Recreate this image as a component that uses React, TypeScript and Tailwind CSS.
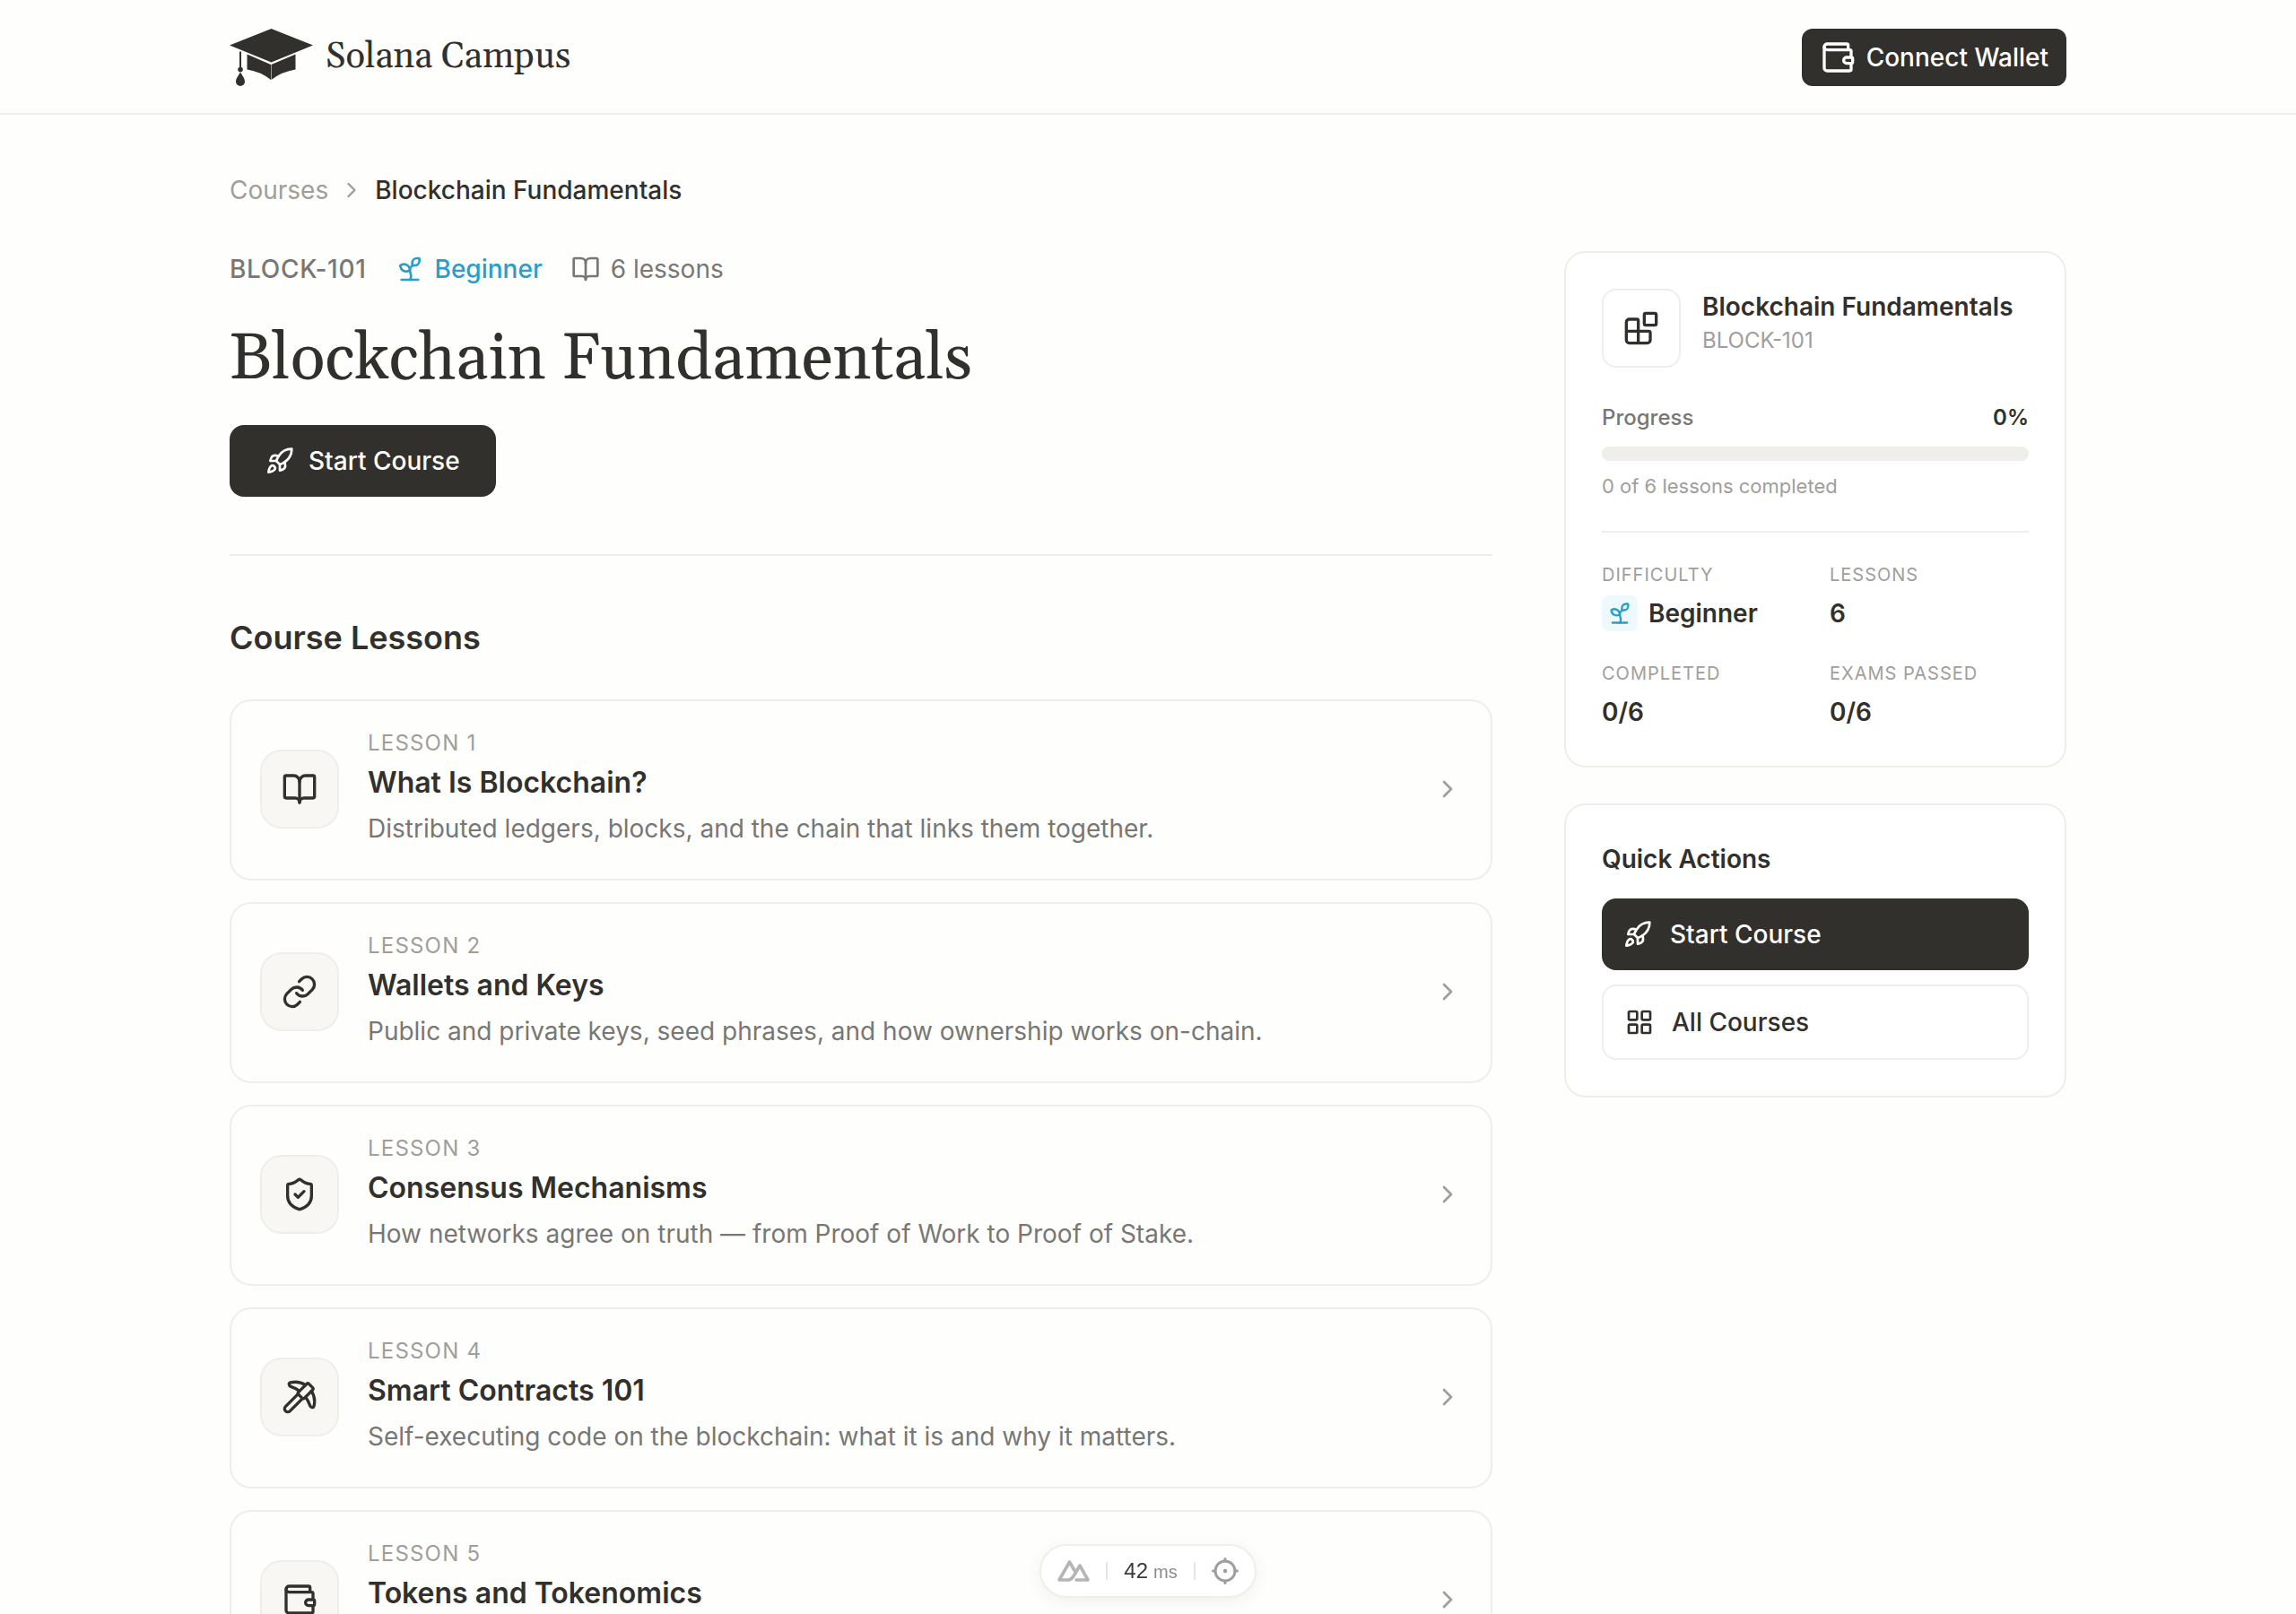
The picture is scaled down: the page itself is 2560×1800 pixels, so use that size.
import { BookOpen, Link, ShieldCheck, Pickaxe, Wallet, ChevronRight, Sprout, Rocket, Blocks, LayoutGrid, type LucideIcon } from "lucide-react";

const lessons: { icon: LucideIcon; title: string; text: string }[] = [
  { icon: BookOpen, title: "What Is Blockchain?", text: "Distributed ledgers, blocks, and the chain that links them together." },
  { icon: Link, title: "Wallets and Keys", text: "Public and private keys, seed phrases, and how ownership works on-chain." },
  { icon: ShieldCheck, title: "Consensus Mechanisms", text: "How networks agree on truth — from Proof of Work to Proof of Stake." },
  { icon: Pickaxe, title: "Smart Contracts 101", text: "Self-executing code on the blockchain: what it is and why it matters." },
  { icon: Wallet, title: "Tokens and Tokenomics", text: "Fungible and non-fungible tokens, supply, and incentives." },
];

function Logo() {
  return (
    <svg viewBox="0 0 93 64" className="h-16 w-[93px]" fill="#32302c" aria-hidden="true">
      <path d="M46.5 0 93 18.500 46.500 37.500 0 18.500Z" />
      <path d="M19.500 28.500 46 40v17Q35 48 19.500 45.500Z" />
      <path d="M73.500 28.500 46.500 40v17Q58 48 73.500 45.500Z" />
      <path d="M11 25.500h2V43h-2Z" />
      <circle cx="12" cy="45.500" r="2.800" />
      <path d="M12 48c1.500 4 5 7 5 11.200a5 4.800 0 0 1-10 0C7 55 10.500 52 12 48Z" />
    </svg>
  );
}

function Header() {
  return (
    <header className="border-b-2 border-[#efeeea]">
      <div className="mx-auto flex max-w-[2048px] items-center justify-between pt-8 pb-[30px]">
        <a href="#" className="flex items-center gap-3.5">
          <Logo />
          <span className="font-[Gelasio,Georgia,serif] text-[40px] leading-[56px]">Solana Campus</span>
        </a>
        <button type="button" className="flex h-16 items-center gap-3 rounded-xl bg-[#32302c] px-5 text-[28px] font-medium text-white">
          <Wallet size={40} />
          Connect Wallet
        </button>
      </div>
    </header>
  );
}

function LessonCard({ icon: Icon, title, text, index }: { icon: LucideIcon; title: string; text: string; index: number }) {
  return (
    <li>
      <a href="#" className="flex items-center gap-8 rounded-3xl border-2 border-[#efeeea] px-8 pt-[31px] pb-[33px]">
        <span className="flex size-[88px] shrink-0 items-center justify-center rounded-3xl border-2 border-[#efeeea] bg-[#f8f7f4]">
          <Icon size={40} />
        </span>
        <span className="flex min-w-0 flex-1 flex-col">
          <span className="text-2xl tracking-[1.2px] text-[#9f9e9b]">LESSON {index}</span>
          <span className="mt-1 text-[32px] leading-[48px] font-semibold">{title}</span>
          <span className="mt-1 text-[28px] leading-[46px] text-[#787774]">{text}</span>
        </span>
        <ChevronRight size={32} className="shrink-0 text-[#9f9e9b]" />
      </a>
    </li>
  );
}

function Stat({ label, value, icon }: { label: string; value: string; icon?: boolean }) {
  return (
    <div>
      <dt className="text-xl leading-[30px] tracking-[1px] text-[#9f9e9b]">{label}</dt>
      <dd className="mt-2 flex h-10 items-center gap-3 text-[28px] font-semibold">
        {icon && (
          <span className="flex size-10 items-center justify-center rounded-lg bg-[#edf9fd] text-[#2a9dc8]">
            <Sprout size={28} />
          </span>
        )}
        {value}
      </dd>
    </div>
  );
}

function Sidebar() {
  return (
    <aside className="flex w-[560px] shrink-0 flex-col gap-10">
      <section className="rounded-3xl border-2 border-[#efeeea] bg-white p-10">
        <div className="flex gap-6">
          <span className="flex size-[88px] shrink-0 items-center justify-center rounded-2xl border-2 border-[#efeeea]">
            <Blocks size={40} />
          </span>
          <div>
            <h2 className="text-[28px] leading-10 font-semibold">Blockchain Fundamentals</h2>
            <p className="text-2xl leading-9 text-[#9f9e9b]">BLOCK-101</p>
          </div>
        </div>
        <div className="mt-10 flex justify-between text-2xl font-medium">
          <span id="progress" className="text-[#787774]">Progress</span>
          <span className="font-semibold">0%</span>
        </div>
        <div role="progressbar" aria-labelledby="progress" aria-valuenow={0} className="mt-4 h-4 rounded-full bg-[#efeeea]" />
        <p className="mt-3 text-[22px] leading-8 text-[#9f9e9b]">0 of 6 lessons completed</p>
        <dl className="mt-[34px] grid grid-cols-2 gap-8 border-t-2 border-[#efeeea] pt-8">
          <Stat label="DIFFICULTY" value="Beginner" icon />
          <Stat label="LESSONS" value="6" />
          <Stat label="COMPLETED" value="0/6" />
          <Stat label="EXAMS PASSED" value="0/6" />
        </dl>
      </section>
      <section className="rounded-3xl border-2 border-[#efeeea] bg-white p-10">
        <h2 className="text-[28px] leading-10 font-semibold">Quick Actions</h2>
        <button type="button" className="mt-6 flex h-20 w-full items-center gap-5 rounded-2xl bg-[#32302c] px-6 text-[28px] font-medium text-white">
          <Rocket size={32} />
          Start Course
        </button>
        <button type="button" className="mt-4 flex h-[84px] w-full items-center gap-5 rounded-2xl border-2 border-[#efeeea] px-6 text-[28px] font-medium">
          <LayoutGrid size={32} />
          All Courses
        </button>
      </section>
    </aside>
  );
}

function DevBar() {
  return (
    <div className="fixed bottom-[18px] left-1/2 flex h-[60px] w-[242px] -translate-x-1/2 items-center justify-between rounded-full border-2 border-[#efeeee] bg-white px-[18px] shadow-[0_4px_20px_rgba(0,0,0,0.06)]">
      <button type="button" aria-label="Open devtools" className="flex">
        <svg viewBox="0 0 36 24" className="h-6 w-9" fill="none" stroke="#b5b5b5" strokeWidth="3.600" strokeLinejoin="round" strokeLinecap="round" aria-hidden="true">
          <path d="M21 22h13L25 6l-6.500 11Q15.500 22 12 22H2L13.500 2l6.500 11" />
        </svg>
      </button>
      <span className="h-5 w-0.5 bg-[#e6e6e6]" />
      <span className="flex items-baseline gap-1.5 font-[Liberation_Sans,Arial,sans-serif] text-[24px] text-[#3a3a3a]">
        42 <span className="text-[20px] text-[#8c8c8c]">ms</span>
      </span>
      <span className="h-5 w-0.5 bg-[#e6e6e6]" />
      <button type="button" aria-label="Inspect components" className="flex">
        <svg viewBox="0 0 30 30" className="size-[30px]" fill="none" stroke="#9e9e9e" strokeWidth="3" strokeLinecap="round" aria-hidden="true">
          <circle cx="15" cy="15" r="11" />
          <path d="M15 1.500V4M15 26v2.500M1.500 15H4M26 15h2.500" />
          <circle cx="15" cy="15" r="2.200" fill="#9e9e9e" stroke="none" />
        </svg>
      </button>
    </div>
  );
}

export default function App() {
  return (
    <div className="min-h-screen bg-[#fefefc] font-[Inter,sans-serif] text-[#32302c]">
      <Header />
      <main className="mx-auto max-w-[2048px] pt-16 pb-16">
        <nav aria-label="Breadcrumb" className="flex items-center gap-3 text-[28px] leading-10">
          <a href="#" className="text-[#9f9e9b]">Courses</a>
          <ChevronRight size={28} className="text-[#9f9e9b]" />
          <span className="font-medium">Blockchain Fundamentals</span>
        </nav>
        <div className="mt-12 flex items-start gap-20">
          <div className="min-w-0 flex-1">
            <div className="flex items-center gap-8 text-[28px] leading-10 text-[#787774]">
              <span className="font-medium tracking-wide">BLOCK-101</span>
              <span className="flex items-center gap-3 font-medium text-[#2a9dc8]">
                <Sprout size={32} />
                Beginner
              </span>
              <span className="flex items-center gap-3">
                <BookOpen size={32} />
                6 lessons
              </span>
            </div>
            <h1 className="mt-9 font-[Gelasio,Georgia,serif] text-7xl leading-[90px]">Blockchain Fundamentals</h1>
            <button type="button" className="mt-7 flex h-20 items-center gap-4 rounded-2xl bg-[#32302c] px-10 text-[28px] font-medium text-white">
              <Rocket size={32} />
              Start Course
            </button>
            <section className="mt-16 border-t-2 border-[#efeeea] pt-16">
              <h2 className="text-4xl leading-[54px] font-semibold">Course Lessons</h2>
              <ol className="mt-[42px] flex flex-col gap-6">
                {lessons.map((lesson, i) => (
                  <LessonCard key={lesson.title} {...lesson} index={i + 1} />
                ))}
              </ol>
            </section>
          </div>
          <Sidebar />
        </div>
      </main>
      <DevBar />
    </div>
  );
}
